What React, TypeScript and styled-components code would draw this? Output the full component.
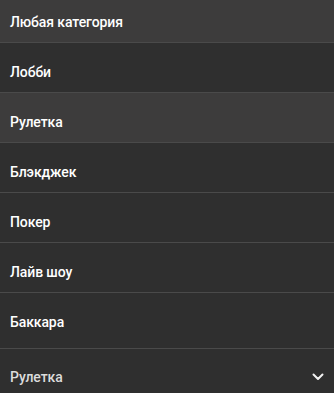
import { useEffect, useRef } from "react";
import styled, { createGlobalStyle } from "styled-components";

const GlobalStyle = createGlobalStyle`
  html, body {
    margin: 0;
    padding: 0;
    background: #2f2f2f;
  }
  body {
    font-family: Roboto, "Noto Sans", "Liberation Sans", sans-serif;
  }
`;

const Wrap = styled.div`
  width: 334px;
  height: 393px;
  display: flex;
  flex-direction: column;
  background: #2f2f2f;
  overflow: hidden;
`;

const List = styled.ul`
  list-style: none;
  margin: 0;
  padding: 0 0 6px 0;
  height: 348px;
  box-sizing: border-box;
  flex: none;
  overflow-y: auto;
  scrollbar-width: none;

  &::-webkit-scrollbar {
    display: none;
  }
`;

const Item = styled.li<{ $active?: boolean }>`
  height: 50px;
  display: flex;
  align-items: center;
  padding: 8px 10px 0 10px;
  box-sizing: border-box;
  background: ${(p) => (p.$active ? "#3d3c3c" : "#2f2f2f")};
  border-bottom: 1px solid #4a4a4a;
  color: #ffffff;
  font-size: 14px;
  font-weight: 500;
  letter-spacing: -0.1px;
  cursor: pointer;

  &:last-child {
    border-bottom: none;
  }
`;

const Select = styled.div`
  flex: 1;
  display: flex;
  align-items: center;
  justify-content: space-between;
  padding: 11px 10px 0 10px;
  border-top: 1px solid #4a4a4a;
  color: #dcdcdc;
  font-size: 14px;
  font-weight: 500;
  letter-spacing: -0.1px;
`;

const Chevron = () => (
  <svg width="12" height="8" viewBox="0 0 12 8" fill="none">
    <path
      d="M1.5 1.5 L6 6 L10.5 1.5"
      stroke="#f2f2f2"
      strokeWidth="2"
      strokeLinecap="round"
      strokeLinejoin="round"
    />
  </svg>
);

const categories = [
  { name: "Любая категория", active: true },
  { name: "Лобби" },
  { name: "Рулетка", active: true },
  { name: "Блэкджек" },
  { name: "Покер" },
  { name: "Лайв шоу" },
  { name: "Баккара" },
];

const App = () => {
  const listRef = useRef<HTMLUListElement>(null);

  useEffect(() => {
    if (listRef.current) listRef.current.scrollTop = 7;
  }, []);

  return (
    <>
      <GlobalStyle />
      <Wrap>
        <List ref={listRef}>
          {categories.map((c) => (
            <Item key={c.name} $active={c.active}>
              {c.name}
            </Item>
          ))}
        </List>
        <Select>
          <span>Рулетка</span>
          <Chevron />
        </Select>
      </Wrap>
    </>
  );
};

export default App;
